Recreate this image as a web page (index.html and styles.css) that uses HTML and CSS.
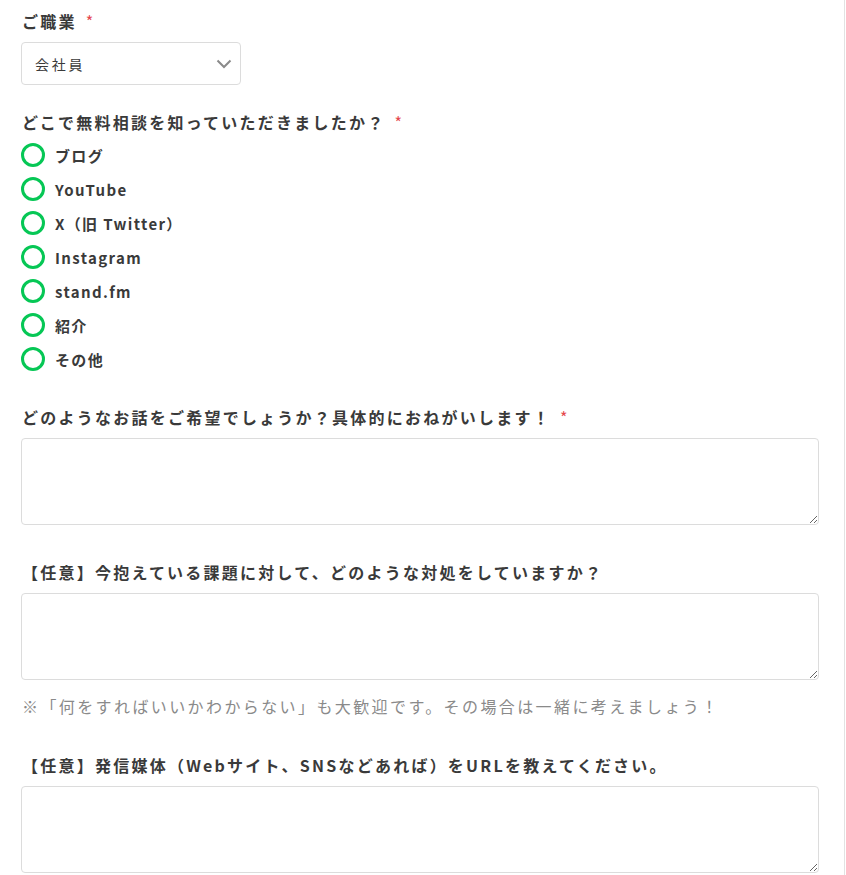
FILE: index.html
```html
<!DOCTYPE html>
<html lang="ja">
<head>
<meta charset="utf-8">
<title>お問い合わせフォーム</title>
<link rel="stylesheet" href="styles.css">
</head>
<body>
<div class="page">
  <form class="form">
    <div class="field field-select">
      <div class="label">ご職業<span class="req">*</span></div>
      <div class="select">
        <span class="select-value">会社員</span>
        <svg class="chevron" width="16" height="10" viewBox="0 0 16 10"><path d="M1.5 1.5 L8 8 L14.5 1.5" fill="none" stroke="#8a8a8a" stroke-width="2"/></svg>
      </div>
    </div>

    <div class="field field-radio">
      <div class="label">どこで無料相談を知っていただきましたか？<span class="req">*</span></div>
      <ul class="radios">
        <li class="radio"><span class="circle"></span><span class="radio-text">ブログ</span></li>
        <li class="radio"><span class="circle"></span><span class="radio-text">YouTube</span></li>
        <li class="radio"><span class="circle"></span><span class="radio-text">X（旧 Twitter）</span></li>
        <li class="radio"><span class="circle"></span><span class="radio-text">Instagram</span></li>
        <li class="radio"><span class="circle"></span><span class="radio-text">stand.fm</span></li>
        <li class="radio"><span class="circle"></span><span class="radio-text">紹介</span></li>
        <li class="radio"><span class="circle"></span><span class="radio-text">その他</span></li>
      </ul>
    </div>

    <div class="field">
      <div class="label">どのようなお話をご希望でしょうか？具体的におねがいします！<span class="req">*</span></div>
      <textarea class="textarea"></textarea>
    </div>

    <div class="field">
      <div class="label">【任意】今抱えている課題に対して、どのような対処をしていますか？</div>
      <textarea class="textarea"></textarea>
      <p class="help">※「何をすればいいかわからない」も大歓迎です。その場合は一緒に考えましょう！</p>
    </div>

    <div class="field">
      <div class="label">【任意】発信媒体（Webサイト、SNSなどあれば）をURLを教えてください。</div>
      <textarea class="textarea"></textarea>
    </div>
  </form>
</div>
</body>
</html>
```

FILE: styles.css
```css
html, body {
  margin: 0;
  padding: 0;
  background: #fff;
}

body {
  font-family: "Noto Sans CJK JP", "Noto Sans", sans-serif;
  color: #3a3a3a;
}

.page {
  width: 844px;
  min-height: 100vh;
  border-right: 1px solid #e2e2e2;
  box-sizing: content-box;
}

.form {
  padding: 9px 25px 0 21px;
}

.field {
  margin-bottom: 35px;
}

.field-select {
  margin-bottom: 25px;
}

.field-radio {
  margin-bottom: 29px;
}

.label {
  font-size: 16px;
  line-height: 24px;
  font-weight: 700;
  letter-spacing: 0.14em;
  margin-bottom: 9px;
  padding-left: 1px;
}

.req {
  color: #e5484d;
  font-weight: 400;
  margin-left: 9px;
}

.select {
  width: 220px;
  height: 43px;
  box-sizing: border-box;
  border: 1px solid #dcdcdc;
  border-radius: 4px;
  display: flex;
  align-items: center;
  justify-content: space-between;
  padding: 0 8px 0 13px;
}

.select-value {
  font-size: 14px;
  letter-spacing: 0.2em;
  color: #3a3a3a;
}

.chevron {
  display: block;
}

.radios {
  list-style: none;
  margin: -5px 0 0;
  padding: 0;
}

.radio {
  height: 34px;
  display: flex;
  align-items: center;
  gap: 10px;
}

.circle {
  width: 24px;
  height: 24px;
  box-sizing: border-box;
  border: 3px solid #06c755;
  border-radius: 50%;
  flex: none;
}

.radio-text {
  font-size: 15px;
  font-weight: 700;
  letter-spacing: 0.09em;
  color: #3a3a3a;
}

.textarea {
  display: block;
  width: 798px;
  height: 87px;
  box-sizing: border-box;
  border: 1px solid #dcdcdc;
  border-radius: 4px;
  margin: 0;
  padding: 8px 12px;
  font-family: inherit;
  font-size: 14px;
  resize: vertical;
  outline: none;
}

.help {
  margin: 14px 0 0;
  font-size: 16px;
  line-height: 24px;
  letter-spacing: 0.15em;
  color: #8a8a8a;
  padding-left: 1px;
}
```
